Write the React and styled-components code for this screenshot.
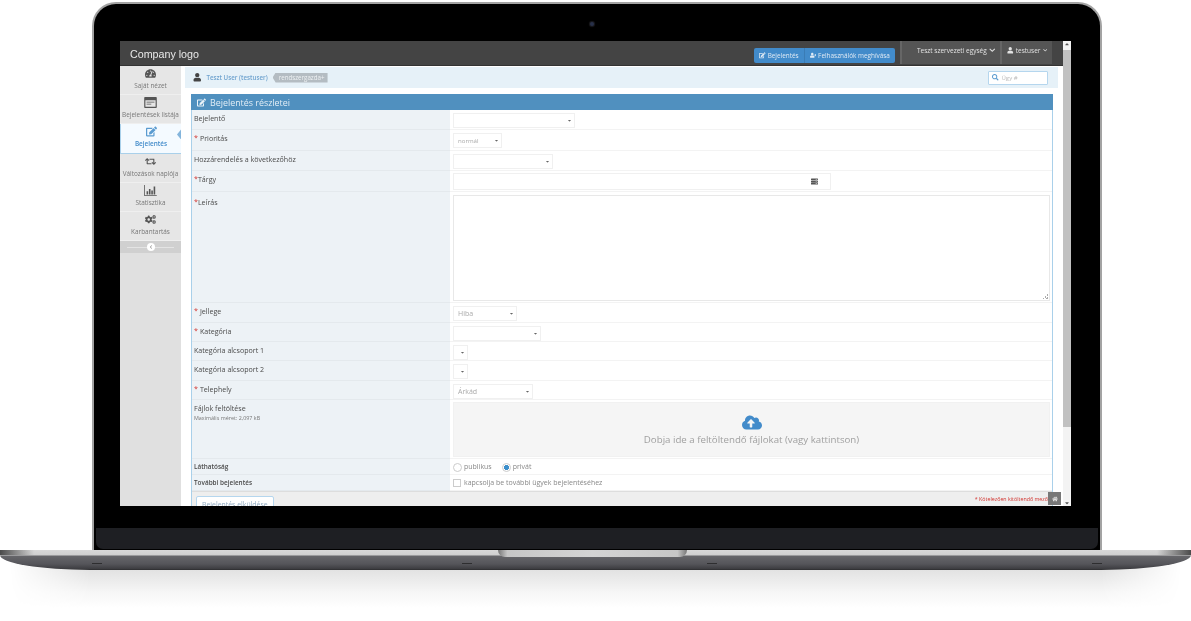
import React from 'react';
import styled, { createGlobalStyle } from 'styled-components';
import {
  FaEdit, FaUser, FaUserPlus, FaTachometerAlt, FaRetweet, FaCogs, FaSearch, FaHome,
  FaChevronDown, FaCloudUploadAlt, FaCaretDown, FaServer, FaChevronLeft, FaCaretUp,
} from 'react-icons/fa';

const GlobalStyle = createGlobalStyle`
  html, body { margin: 0; padding: 0; background: #fff; }
  * { box-sizing: border-box; }
`;

const Page = styled.div`
  width: 1191px;
  height: 621px;
  overflow: hidden;
  background: #fff;
  padding-top: 2px;
  font-family: "Open Sans", "Liberation Sans", sans-serif;
`;

const Lid = styled.div`
  position: relative;
  width: 1010px;
  height: 548px;
  margin-left: 92px;
  padding-top: 37px;
  background: #000;
  border: 2px solid #a3a3a3;
  border-bottom: 0;
  border-radius: 24px 24px 0 0;
  display: flex;
  flex-direction: column;
`;

const Camera = styled.div`
  position: absolute;
  left: 496px;
  top: 18px;
  width: 4px;
  height: 4px;
  border-radius: 50%;
  background: #27304a;
  box-shadow: 0 0 1px 1px #1b1b1f;
`;

const Screen = styled.div`
  width: 951px;
  height: 465px;
  margin-left: 26px;
  flex: none;
  display: flex;
  background: #fff;
  overflow: hidden;
  filter: blur(0.45px);
`;

const Chin = styled.div`
  height: 21px;
  margin: 22px 2px 0;
  background: #1e1f23;
  border-radius: 0 0 7px 7px;
`;

const Desk = styled.div`
  position: relative;
  z-index: 1;
  height: 20px;
  border-radius: 0 0 90px 90px / 0 0 15px 15px;
  background:
    linear-gradient(90deg, #4a4a4a 0, rgba(90, 90, 90, 0) 34px, rgba(90, 90, 90, 0) calc(100% - 34px), #4a4a4a 100%) top / 100% 5px no-repeat,
    linear-gradient(#d8d8d8 0, #cfcfcf 5px, #66666a 6px, #55555a 14px, #3c3c40 19px, #28282a 20px);
`;

const Notch = styled.div`
  position: absolute;
  left: 498px;
  top: 0;
  width: 189px;
  height: 7px;
  border-radius: 0 0 8px 8px;
  background: linear-gradient(90deg, #777 0, #c6c6c6 5%, #d4d4d4 50%, #c6c6c6 95%, #777 100%);
`;

const Vent = styled.div`
  position: absolute;
  top: 13px;
  left: ${p => p.$left}px;
  width: 10px;
  height: 1px;
  background: #2e2e30;
`;

const DeskShadow = styled.div`
  height: 56px;
  margin-top: -16px;
  background: linear-gradient(#dcdcdc 0, #e2e2e2 16px, #f6f6f6 38px, #fff 54px);
  mask-image: linear-gradient(90deg, transparent 10px, #000 90px, #000 calc(100% - 90px), transparent calc(100% - 10px));
`;

const Workspace = styled.div`
  width: 943px;
  flex: none;
  display: flex;
  flex-direction: column;
`;

const Scrollbar = styled.div`
  width: 8px;
  flex: none;
  display: flex;
  flex-direction: column;
  align-items: center;
  background: #f3f3f3;
  color: #555;
  font-size: 6px;
`;

const ScrollThumb = styled.div`
  width: 100%;
  height: 377px;
  margin: 3px 0 auto;
  background: #c1c1c1;
`;

const Header = styled.header`
  height: 25px;
  flex: none;
  display: flex;
  align-items: flex-start;
  background: #444;
  border-bottom: 1px solid #333;
  color: #fff;
`;

const Logo = styled.div`
  margin: 6px auto 0 10px;
  font-family: "Liberation Sans", sans-serif;
  font-size: 10.7px;
  line-height: 14px;
  color: #e8e8e8;
`;

const ButtonGroup = styled.div`
  display: flex;
  margin: 7px 5px 0 0;
  height: 15px;
  border-radius: 2px;
  overflow: hidden;
`;

const HeadButton = styled.div`
  display: flex;
  align-items: center;
  gap: 2px;
  padding: 0 5px;
  background: #428bca;
  color: #dfeaf4;
  font-size: 6.4px;
  & + & { border-left: 1px solid #3a7cb5; }
  svg { font-size: 6.5px; }
`;

const HeadMenu = styled.div`
  height: 23px;
  display: flex;
  align-items: center;
  gap: 2px;
  padding: 0 ${p => p.$right}px 4px ${p => p.$left}px;
  background: #555;
  border-left: 2px solid #666;
  color: #e2e2e2;
  font-size: 6.5px;
  svg { font-size: 4.5px; }
  svg:first-child { font-size: 6.5px; }
`;

const HeadEnd = styled.div`
  width: 11px;
`;

const Body = styled.div`
  flex: 1;
  min-height: 0;
  display: flex;
`;

const Sidebar = styled.nav`
  width: 61px;
  flex: none;
  background: #e0e0e0;
`;

const NavItem = styled.div`
  position: relative;
  height: 29.2px;
  display: flex;
  flex-direction: column;
  align-items: center;
  padding-top: 2px;
  gap: 2px;
  background: ${p => (p.$active ? '#f4faff' : '#e6e6e6')};
  border-bottom: 1px solid ${p => (p.$active ? '#a9d0ea' : '#efefef')};
  border-left: ${p => (p.$active ? '1px solid #a9d0ea' : '0')};
  color: ${p => (p.$active ? '#428bca' : '#777')};
  font-size: 6.4px;
  line-height: 9px;
  white-space: nowrap;
  font-weight: ${p => (p.$active ? 600 : 400)};
  svg { font-size: 11px; color: ${p => (p.$active ? '#5a9bd0' : '#555')}; height: 11px; }
`;

const ActiveArrow = styled.div`
  position: absolute;
  right: 0;
  top: 5px;
  width: 4px;
  height: 10px;
  background: #84b5dc;
  clip-path: polygon(100% 0, 100% 100%, 0 50%);
`;

const Collapse = styled.div`
  height: 12px;
  display: flex;
  align-items: center;
  justify-content: center;
  background: #d0d0d0;
  position: relative;
  &::before {
    content: '';
    position: absolute;
    left: 7px;
    right: 7px;
    top: 6px;
    height: 1px;
    background: #e4e4e4;
  }
`;

const CollapseKnob = styled.div`
  position: relative;
  width: 8px;
  height: 8px;
  border-radius: 50%;
  background: #fff;
  color: #999;
  font-size: 4px;
  display: flex;
  align-items: center;
  justify-content: center;
`;

const Main = styled.main`
  flex: 1;
  min-width: 0;
  overflow: hidden;
  padding-left: 4px;
`;

const Breadcrumb = styled.div`
  width: 873px;
  height: 21px;
  margin-top: 1px;
  display: flex;
  align-items: center;
  padding: 0 10px 0 8px;
  background: #e6f1f8;
`;

const UserName = styled.span`
  display: inline-flex;
  align-items: center;
  gap: 5px;
  color: #6fa3cf;
  font-size: 6.2px;
  font-weight: 600;
  svg { font-size: 8.5px; color: #444; }
`;

const RoleTag = styled.span`
  margin-left: 5px;
  height: 10px;
  padding: 0 3px 0 6px;
  display: inline-flex;
  align-items: center;
  background: #b4bcc2;
  color: #eef1f3;
  font-size: 6.2px;
  clip-path: polygon(3px 0, 100% 0, 100% 100%, 3px 100%, 0 50%);
`;

const Search = styled.div`
  margin-left: auto;
  width: 60px;
  height: 14px;
  display: flex;
  align-items: center;
  gap: 3px;
  padding-left: 3px;
  background: #fff;
  border: 1px solid #b5d6ee;
  border-radius: 1px;
  color: #bbb;
  font-size: 6px;
  svg { color: #5a9bd0; font-size: 6.5px; }
`;

const Panel = styled.section`
  width: 862px;
  margin: 6px 0 0 6px;
  border: 1px solid #a9d0ea;
  border-top: 0;
`;

const PanelTitle = styled.h2`
  height: 16px;
  margin: 0 -1px;
  display: flex;
  align-items: center;
  gap: 4px;
  padding-left: 6px;
  background: #5090bf;
  color: #e3eef6;
  font-size: 8.9px;
  font-weight: 400;
  svg { font-size: 9px; color: #eaf2f8; }
`;

const Row = styled.div`
  display: grid;
  grid-template-columns: 258px 1fr;
  height: ${p => p.$h}px;
  border-bottom: 1px solid #f3f3f3;
`;

const Label = styled.div`
  padding: ${p => p.$top || 3.2}px 0 0 2px;
  background: #edf2f6;
  color: #4a4a4a;
  font-size: ${p => (p.$strong ? 6.4 : 7.1)}px;
  line-height: 10px;
  font-weight: ${p => (p.$strong ? 600 : 400)};
  border-bottom: 1px solid #e4e9ed;
  margin-bottom: -1px;
`;

const Star = styled.span`
  color: #d2322d;
  margin-right: ${p => (p.$tight ? 0 : 2)}px;
`;

const Hint = styled.div`
  font-size: 5.4px;
  line-height: 7px;
  margin-top: 2px;
  color: #777;
`;

const Value = styled.div`
  padding: 3px 2px 0 3px;
  display: flex;
  align-items: flex-start;
  color: #777;
  font-size: 7px;
  line-height: 14px;
`;

const Select = styled.div`
  width: ${p => p.$w}px;
  height: 15px;
  display: flex;
  align-items: center;
  justify-content: space-between;
  padding: 0 2px 0 4px;
  background: #fff;
  border: 1px solid #f0f0f0;
  color: #aaa;
  font-size: ${p => (p.$small ? 6.1 : 7)}px;
  svg { color: #666; font-size: 5px; margin-left: auto; flex: none; }
`;

const TextInput = styled.div`
  width: 378px;
  height: 17px;
  margin-top: -1px;
  display: flex;
  align-items: center;
  justify-content: flex-end;
  padding-right: 12px;
  border: 1px solid #f0f0f0;
  svg { color: #555; font-size: 7px; }
`;

const TextArea = styled.div`
  position: relative;
  width: 597px;
  height: 106px;
  border: 1px solid #e8e8e8;
  &::after {
    content: '';
    position: absolute;
    right: 1px;
    bottom: 1px;
    width: 5px;
    height: 5px;
    background: linear-gradient(135deg, transparent 50%, #aaa 50%, #aaa 60%, transparent 60%, transparent 75%, #aaa 75%);
  }
`;

const Dropzone = styled.div`
  width: 597px;
  height: 55px;
  margin-top: -1px;
  display: flex;
  flex-direction: column;
  align-items: center;
  padding-top: 11px;
  background: #f5f5f5;
  border: 1px solid #f1f1f1;
  color: #a0a0a0;
  font-size: 9.7px;
  line-height: 13px;
  svg { font-size: 20px; height: 17px; color: #428bca; margin-bottom: 2px; }
`;

const Radio = styled.span`
  width: 9px;
  height: 9px;
  margin: 1px 2px 0 0;
  flex: none;
  border-radius: 50%;
  border: 1px solid #ccc;
  background: ${p => (p.$on ? 'radial-gradient(circle, #3d8fcb 0 2.4px, #fff 2.8px)' : '#fff')};
`;

const Choice = styled.div`
  display: flex;
  align-items: center;
  margin-right: 10px;
  font-size: 7px;
  color: #888;
  line-height: 10px;
`;

const Checkbox = styled.span`
  width: 8px;
  height: 8px;
  margin-right: 3px;
  flex: none;
  border: 1px solid #ccc;
`;

const Footer = styled.div`
  height: 30px;
  display: flex;
  justify-content: space-between;
  align-items: flex-start;
  padding: 4px 4px 0 4px;
  background: #eee;
  border-top: 1px solid #ddd;
`;

const SubmitButton = styled.div`
  height: 16px;
  padding: 3px 5px 0;
  background: #fff;
  border: 1px solid #b5d6ee;
  border-radius: 2px;
  color: #8fa9c0;
  font-size: 6.9px;
  line-height: 9px;
`;

const Required = styled.div`
  color: #d2322d;
  font-size: 5.3px;
  line-height: 7px;
  white-space: nowrap;
`;

const ToTop = styled.div`
  position: absolute;
  right: 10px;
  bottom: 1px;
  width: 13px;
  height: 13px;
  display: flex;
  align-items: center;
  justify-content: center;
  background: #777;
  color: #ddd;
  font-size: 6px;
`;

const ScreenInner = styled.div`
  position: relative;
  display: flex;
  width: 100%;
`;

// the two nav icons font awesome has no match for
const ListIcon = () => (
  <svg viewBox="0 0 16 14" width="13" fill="currentColor">
    <path d="M1 0h14a1 1 0 0 1 1 1v12a1 1 0 0 1-1 1H1a1 1 0 0 1-1-1V1a1 1 0 0 1 1-1zm.5 4v8.5h13V4zM3 6h10v1H3zm0 2.5h6v1H3z" />
  </svg>
);

const BarsIcon = () => (
  <svg viewBox="0 0 16 14" width="13" fill="currentColor">
    <path d="M0 0h1v13h15v1H0zM3 8h2v4H3zm3-3h2v7H6zm3 2h2v5H9zm3-5h2v10h-2z" />
  </svg>
);

const navItems = [
  { icon: <FaTachometerAlt />, label: 'Saját nézet' },
  { icon: <ListIcon />, label: 'Bejelentések listája' },
  { icon: <FaEdit />, label: 'Bejelentés', active: true },
  { icon: <FaRetweet />, label: 'Változások naplója' },
  { icon: <BarsIcon />, label: 'Statisztika' },
  { icon: <FaCogs />, label: 'Karbantartás' },
];

function App() {
  return (
    <Page>
      <GlobalStyle />
      <Lid>
        <Camera />
        <Screen>
          <ScreenInner>
            <Workspace>
              <Header>
                <Logo>Company logo</Logo>
                <ButtonGroup>
                  <HeadButton><FaEdit /> Bejelentés</HeadButton>
                  <HeadButton><FaUserPlus /> Felhasználók meghívása</HeadButton>
                </ButtonGroup>
                <HeadMenu $left={15} $right={5}>Teszt szervezeti egység <FaChevronDown /></HeadMenu>
                <HeadMenu $left={5} $right={5}><FaUser /> testuser <FaChevronDown /></HeadMenu>
                <HeadEnd />
              </Header>
              <Body>
                <Sidebar>
                  {navItems.map(item => (
                    <NavItem key={item.label} $active={item.active}>
                      {item.icon}
                      {item.label}
                      {item.active && <ActiveArrow />}
                    </NavItem>
                  ))}
                  <Collapse><CollapseKnob><FaChevronLeft /></CollapseKnob></Collapse>
                </Sidebar>
                <Main>
                  <Breadcrumb>
                    <UserName><FaUser /> Teszt User (testuser)</UserName>
                    <RoleTag>rendszergazda+</RoleTag>
                    <Search><FaSearch /> Ügy #</Search>
                  </Breadcrumb>
                  <Panel>
                    <PanelTitle><FaEdit /> Bejelentés részletei</PanelTitle>
                    <Row $h={20}>
                      <Label>Bejelentő</Label>
                      <Value><Select $w={122}><FaCaretDown /></Select></Value>
                    </Row>
                    <Row $h={20.5}>
                      <Label><Star>*</Star>Prioritás</Label>
                      <Value><Select $w={49} $small>normál<FaCaretDown /></Select></Value>
                    </Row>
                    <Row $h={20.5}>
                      <Label>Hozzárendelés a következőhöz</Label>
                      <Value><Select $w={100}><FaCaretDown /></Select></Value>
                    </Row>
                    <Row $h={21}>
                      <Label><Star $tight>*</Star>Tárgy</Label>
                      <Value><TextInput><FaServer /></TextInput></Value>
                    </Row>
                    <Row $h={111}>
                      <Label $top={4.5}><Star $tight>*</Star>Leírás</Label>
                      <Value><TextArea /></Value>
                    </Row>
                    <Row $h={19.5}>
                      <Label><Star>*</Star>Jellege</Label>
                      <Value><Select $w={64}>Hiba<FaCaretDown /></Select></Value>
                    </Row>
                    <Row $h={19.5}>
                      <Label><Star>*</Star>Kategória</Label>
                      <Value><Select $w={88}><FaCaretDown /></Select></Value>
                    </Row>
                    <Row $h={19}>
                      <Label>Kategória alcsoport 1</Label>
                      <Value><Select $w={15}><FaCaretDown /></Select></Value>
                    </Row>
                    <Row $h={20}>
                      <Label>Kategória alcsoport 2</Label>
                      <Value><Select $w={15}><FaCaretDown /></Select></Value>
                    </Row>
                    <Row $h={19}>
                      <Label><Star>*</Star>Telephely</Label>
                      <Value><Select $w={80}>Árkád<FaCaretDown /></Select></Value>
                    </Row>
                    <Row $h={58.5}>
                      <Label>
                        Fájlok feltöltése
                        <Hint>Maximális méret: 2,097 kB</Hint>
                      </Label>
                      <Value>
                        <Dropzone>
                          <FaCloudUploadAlt />
                          Dobja ide a feltöltendő fájlokat (vagy kattintson)
                        </Dropzone>
                      </Value>
                    </Row>
                    <Row $h={16}>
                      <Label $strong>Láthatóság</Label>
                      <Value>
                        <Choice><Radio />publikus</Choice>
                        <Choice><Radio $on />privát</Choice>
                      </Value>
                    </Row>
                    <Row $h={16.5}>
                      <Label $strong>További bejelentés</Label>
                      <Value>
                        <Choice><Checkbox />kapcsolja be további ügyek bejelentéséhez</Choice>
                      </Value>
                    </Row>
                    <Footer>
                      <SubmitButton>Bejelentés elküldése</SubmitButton>
                      <Required>* Kötelezően kitöltendő mező</Required>
                    </Footer>
                  </Panel>
                </Main>
              </Body>
            </Workspace>
            <Scrollbar>
              <FaCaretUp />
              <ScrollThumb />
              <FaCaretDown />
            </Scrollbar>
            <ToTop><FaHome /></ToTop>
          </ScreenInner>
        </Screen>
        <Chin />
      </Lid>
      <Desk>
        <Notch />
        <Vent $left={92} />
        <Vent $left={462} />
        <Vent $left={707} />
        <Vent $left={1092} />
      </Desk>
      <DeskShadow />
    </Page>
  );
}

export default App;
